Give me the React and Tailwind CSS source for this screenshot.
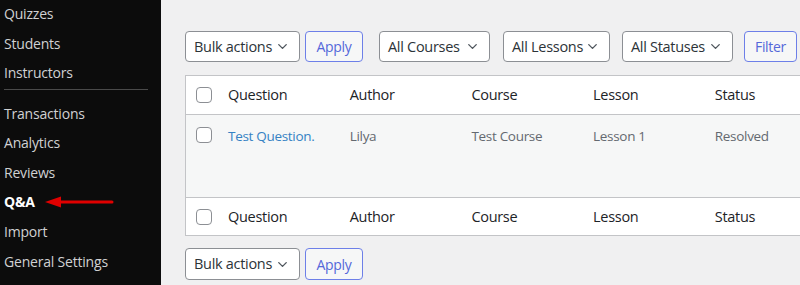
import { ChevronDown } from "lucide-react";

const MENU_TOP = ["Quizzes", "Students", "Instructors"];
const MENU_BOTTOM = ["Transactions", "Analytics", "Reviews", "Q&A", "Import", "General Settings"];
const COLUMNS = ["Question", "Author", "Course", "Lesson", "Status"];

const Select = ({ label, width, height = "h-[31px]" }) => (
  <div className={`${height} ${width} flex items-center justify-between pl-[8px] pr-[9px] bg-white border border-[#8c8f94] rounded-[4px] text-[14.5px] text-[#2c3338]`}>
    <span>{label}</span>
    <ChevronDown className="w-[15px] h-[15px] text-[#50575e]" strokeWidth={2.2} />
  </div>
);

const Button = ({ label, width, height = "h-[31px]" }) => (
  <div className={`${height} ${width} flex items-center justify-center bg-[#f6f7f7] border border-[#6d7fe8] rounded-[4px] text-[14px] text-[#5468da]`}>
    {label}
  </div>
);

const Checkbox = () => (
  <div className="w-[16px] h-[16px] rounded-[4px] border border-[#8c8f94] bg-white shrink-0" />
);

const HeadRow = ({ className = "" }) => (
  <div className={`flex items-center text-[14.5px] text-[#1d2327] ${className}`}>
    <div className="w-[42px] pl-[10px] flex items-center"><Checkbox /></div>
    {COLUMNS.map((c) => (
      <div key={c} className="w-[121.7px] shrink-0">{c}</div>
    ))}
  </div>
);

export default function App() {
  return (
    <div className="flex w-[800px] h-[285px] overflow-hidden" style={{ fontFamily: "'Open Sans', 'Noto Sans', sans-serif" }}>
      {/* Sidebar */}
      <div className="w-[161px] shrink-0 bg-[#0c0c0c] text-[14px] text-[#d0d1d3]">
        <div className="-mt-[1px]">
          {MENU_TOP.map((m) => (
            <div key={m} className="h-[29.6px] flex items-center pl-[4px] tracking-[-0.2px]">{m}</div>
          ))}
          <div className="pt-[1.5px] pb-[8px]">
            <div className="ml-[4px] w-[144px] h-px bg-[#4a4a4a]" />
          </div>
          {MENU_BOTTOM.map((m) => (
            <div key={m} className={`h-[29.6px] flex items-center pl-[4px] tracking-[-0.2px] ${m === "Q&A" ? "font-bold text-white" : ""}`}>
              {m}
              {m === "Q&A" && (
                <svg width="70" height="12" viewBox="0 0 70 12" className="ml-[10px]">
                  <line x1="10" y1="6" x2="67" y2="6" stroke="#e00000" strokeWidth="3" strokeLinecap="round" />
                  <polygon points="0,6 16,0.5 16,11.5" fill="#e00000" />
                </svg>
              )}
            </div>
          ))}
        </div>
      </div>

      {/* Main */}
      <div className="flex-1 bg-[#f0f0f1] pl-[24px] pt-[31px] tracking-[-0.3px]">
        <div className="flex items-center">
          <Select label="Bulk actions" width="w-[115px]" />
          <div className="ml-[5px]"><Button label="Apply" width="w-[58px]" /></div>
          <div className="ml-[16px]"><Select label="All Courses" width="w-[111px]" /></div>
          <div className="ml-[13px]"><Select label="All Lessons" width="w-[107px]" /></div>
          <div className="ml-[12px]"><Select label="All Statuses" width="w-[111px]" /></div>
          <div className="ml-[11px]"><Button label="Filter" width="w-[53px]" /></div>
        </div>

        <div className="mt-[13px] w-[700px] bg-white border border-[#c3c4c7]">
          <HeadRow className="h-[39px] border-b border-[#c3c4c7]" />
          <div className="h-[82px] bg-[#f6f7f7] flex items-start pt-[11px] text-[13.5px] text-[#646970]">
            <div className="w-[42px] pl-[10px] pt-[1px] flex items-center"><Checkbox /></div>
            <div className="w-[121.7px] shrink-0 text-[#3582c4]">Test Question.</div>
            <div className="w-[121.7px] shrink-0">Lilya</div>
            <div className="w-[121.7px] shrink-0">Test Course</div>
            <div className="w-[121.7px] shrink-0">Lesson 1</div>
            <div className="w-[121.7px] shrink-0">Resolved</div>
          </div>
          <HeadRow className="h-[38px] border-t border-[#c3c4c7]" />
        </div>

        <div className="mt-[12px] flex items-center">
          <Select label="Bulk actions" width="w-[115px]" height="h-[32px]" />
          <div className="ml-[5px]"><Button label="Apply" width="w-[58px]" height="h-[32px]" /></div>
        </div>
      </div>
    </div>
  );
}
